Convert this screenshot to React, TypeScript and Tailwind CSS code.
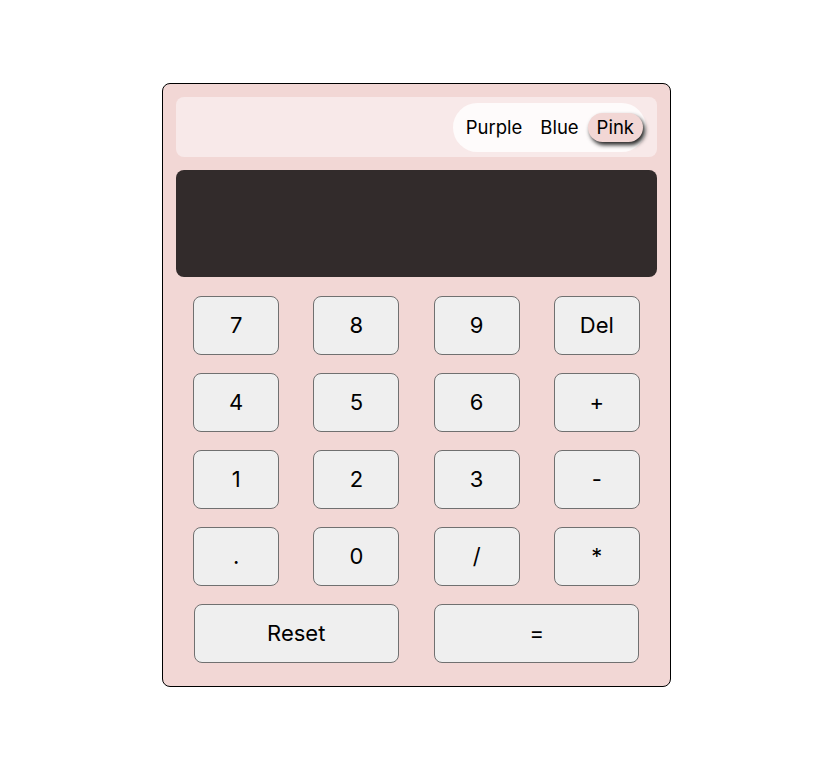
import React, { useState } from 'react';

type Theme = 'Purple' | 'Blue' | 'Pink';

const keys = ['7', '8', '9', 'Del', '4', '5', '6', '+', '1', '2', '3', '-', '.', '0', '/', '*'];

const Key: React.FC<{ label: string; wide?: boolean; onClick: () => void }> = ({ label, wide, onClick }) => (
  <button
    onClick={onClick}
    className={`${wide ? 'w-[205px]' : 'w-[86px]'} h-[59px] rounded-lg border border-[#707070] bg-[#efefef] text-[22px] text-black`}
  >
    {label}
  </button>
);

export default function App() {
  const [theme, setTheme] = useState<Theme>('Pink');
  const [value, setValue] = useState('');

  const press = (k: string) => {
    if (k === 'Del') setValue(v => v.slice(0, -1));
    else setValue(v => v + k);
  };

  return (
    <div
      className="min-h-[770px] w-full bg-white flex justify-center pt-[83px]"
      style={{ fontFamily: '"Inter", "Liberation Sans", sans-serif' }}
    >
      <div className="w-[509px] h-[604px] rounded-lg border border-black bg-[#f2d7d5] p-[13px]">
        {/* theme bar */}
        <div className="h-[60px] rounded-lg bg-[#f8e9e9] flex items-center justify-end pr-[11px]">
          <div className="h-[49px] rounded-full bg-[#fefbfb] flex items-center pl-[4px] pr-[3px]">
            {(['Purple', 'Blue', 'Pink'] as Theme[]).map(t => (
              <button
                key={t}
                onClick={() => setTheme(t)}
                className={`h-[29px] px-[9px] rounded-full text-[18.5px] text-black leading-none ${
                  theme === t ? 'bg-[#f2d7d5] shadow-[2px_3px_4px_rgba(0,0,0,0.85)]' : ''
                }`}
              >
                {t}
              </button>
            ))}
          </div>
        </div>

        {/* display */}
        <div className="mt-[13px] h-[107px] rounded-lg bg-[#322b2b] flex items-center justify-end px-6 text-white text-[40px]">
          {value}
        </div>

        {/* keys */}
        <div className="mt-[19px] grid grid-cols-4 gap-y-[18px] justify-items-center">
          {keys.map(k => (
            <Key key={k} label={k} onClick={() => press(k)} />
          ))}
        </div>
        <div className="mt-[18px] grid grid-cols-2 justify-items-center">
          <Key label="Reset" wide onClick={() => setValue('')} />
          <Key label="=" wide onClick={() => {}} />
        </div>
      </div>
    </div>
  );
}
